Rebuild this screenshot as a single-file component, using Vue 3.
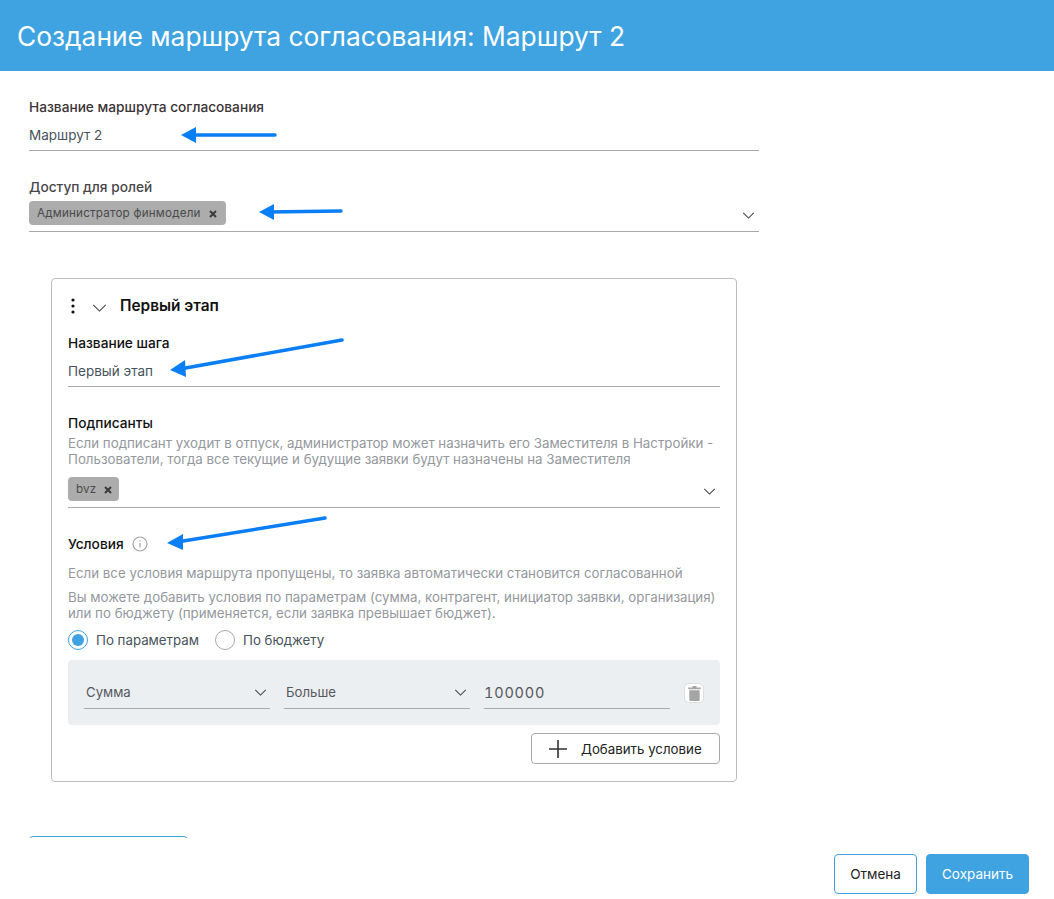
<template>
  <div class="page">
    <header class="head"><h1>Создание маршрута согласования: Маршрут 2</h1></header>
    <main class="body">
      <section class="field name-field">
        <label class="lbl dark">Название маршрута согласования</label>
        <div class="val line">Маршрут 2</div>
      </section>
      <section class="field role-field">
        <label class="lbl grey">Доступ для ролей</label>
        <div class="select line">
          <span class="chip">Администратор финмодели<svg class="x" viewBox="0 0 10 10"><path d="M2 2l6 6M8 2l-6 6"/></svg></span>
          <svg class="chev" viewBox="0 0 14 8"><path d="M1 1l6 6 6-6"/></svg>
        </div>
      </section>
      <section class="card">
        <div class="card-head">
          <svg class="dots" viewBox="0 0 4 16"><circle cx="2" cy="2" r="1.6"/><circle cx="2" cy="8" r="1.6"/><circle cx="2" cy="14" r="1.6"/></svg>
          <svg class="chev big" viewBox="0 0 16 9"><path d="M1 1l7 7 7-7"/></svg>
          <strong>Первый этап</strong>
        </div>
        <label class="lbl black step-lbl">Название шага</label>
        <div class="val line step-val">Первый этап</div>
        <label class="lbl black sign-lbl">Подписанты</label>
        <p class="hint sign-hint">Если подписант уходит в отпуск, администратор может назначить его Заместителя в Настройки - Пользователи, тогда все текущие и будущие заявки будут назначены на Заместителя</p>
        <div class="select line sign-sel">
          <span class="chip small">bvz<svg class="x" viewBox="0 0 10 10"><path d="M2 2l6 6M8 2l-6 6"/></svg></span>
          <svg class="chev" viewBox="0 0 14 8"><path d="M1 1l6 6 6-6"/></svg>
        </div>
        <div class="cond-title">
          <label class="lbl black">Условия</label>
          <svg class="info" viewBox="0 0 16 16"><circle cx="8" cy="8" r="7"/><path d="M8 7v4.5M8 4.2v1.4"/></svg>
        </div>
        <p class="hint h1">Если все условия маршрута пропущены, то заявка автоматически становится согласованной</p>
        <p class="hint h2">Вы можете добавить условия по параметрам (сумма, контрагент, инициатор заявки, организация) или по бюджету (применяется, если заявка превышает бюджет).</p>
        <div class="radios">
          <span class="radio on"></span><span class="rtext">По параметрам</span>
          <span class="radio"></span><span class="rtext">По бюджету</span>
        </div>
        <div class="cond-row">
          <div class="cell c1 line">Сумма<svg class="chev" viewBox="0 0 14 8"><path d="M1 1l6 6 6-6"/></svg></div>
          <div class="cell c2 line">Больше<svg class="chev" viewBox="0 0 14 8"><path d="M1 1l6 6 6-6"/></svg></div>
          <div class="cell c3 line">100000</div>
          <span class="trash"><svg viewBox="1 1 12 14.5"><path d="M1 2.5h12v1.6H1zM5 1h4v1.5H5zM2 5h10v9.5a1 1 0 0 1-1 1H3a1 1 0 0 1-1-1z"/></svg></span>
        </div>
        <div class="add-wrap">
          <button class="add"><svg viewBox="0 0 18 18"><path d="M9 0v18M0 9h18"/></svg>Добавить условие</button>
        </div>
      </section>
      <div class="clipped"></div>
    </main>
    <footer class="foot">
      <button class="btn ghost">Отмена</button>
      <button class="btn solid">Сохранить</button>
    </footer>
    <svg class="arrows" viewBox="0 0 1054 899">
      <g v-for="a in arrows" :key="a.d">
        <path class="shaft" :d="a.d"/>
        <polygon class="tip" :points="a.p"/>
      </g>
    </svg>
  </div>
</template>

<script setup>
const arrows = [
  { d: 'M275 135L190 135', p: '181,135 196,127 196,143' },
  { d: 'M341 211L268 212', p: '259,212 274,204 274,220' },
  { d: 'M342 340L180 369', p: '170,370 185,360 186,377' },
  { d: 'M325 518L177 542', p: '167,543 183,534 183,550' }
]
</script>

<style>
html, body { margin: 0; padding: 0; background: #fff; }
</style>

<style scoped>
.page { position: relative; width: 1054px; height: 899px; display: flex; flex-direction: column; overflow: hidden; font-family: Inter, "Noto Sans", sans-serif; color: #47525c; background: #fff; }
.head { height: 71px; flex: none; background: #3ea3e0; display: flex; align-items: center; padding-left: 17px; }
.head h1 { margin: 0; font-size: 26.35px; font-weight: 400; color: #fff; }
.body { flex: 1; min-height: 0; overflow: hidden; padding: 0 0 0 29px; }
.field { width: 730px; }
.name-field { padding-top: 28px; }
.role-field { padding-top: 28px; }
.lbl { display: block; font-size: 13.7px; line-height: 16px; font-weight: 500; }
.dark { color: #3b3437; }
.grey { color: #47474a; }
.black { color: #111; }
.val { font-size: 13.5px; line-height: 18px; color: #47525c; }
.line { border-bottom: 1px solid #a9a9a9; }
.name-field .val { margin-top: 11px; padding-bottom: 6px; }
.select { display: flex; align-items: center; justify-content: space-between; }
.select > .chev { margin-top: 4px; margin-right: 4px; }
.role-field .select { margin-top: 6px; padding-bottom: 6px; height: 24px; }
.chip { display: inline-flex; align-items: center; background: #acacac; border-radius: 4px; height: 24px; padding: 0 8px; font-size: 11.65px; color: #4a4a4a; letter-spacing: .2px; }
.chip.small { padding-right: 6px; }
.x { width: 10px; height: 10px; margin-left: 7px; margin-top: 2px; }
.x path { stroke: #3a3a3a; stroke-width: 2; fill: none; }
.chev { width: 13px; height: 7px; margin-right: 3px; flex: none; }
.chev path { fill: none; stroke: #444; stroke-width: 1.2; }
.card { box-sizing: border-box; width: 686px; height: 504px; margin: 46px 0 0 22px; padding: 0 16px; border: 1px solid #bdbdbd; border-radius: 4px; background: #fff; }
.card-head { display: flex; align-items: center; height: 54px; }
.dots { width: 4px; height: 16px; fill: #111; margin: 0 0 0 3px; }
.chev.big { width: 15px; height: 8px; margin: 4px 0 0 17px; }
.card-head strong { margin-left: 13px; font-size: 15.4px; line-height: 18px; font-weight: 600; color: #111; }
.step-lbl { margin-top: 2px; }
.step-val { margin-top: 11px; padding-bottom: 6px; }
.sign-lbl { margin-top: 28px; }
.hint { margin: 0; font-size: 13.3px; line-height: 16px; color: #94989d; }
.sign-hint { margin-top: 4px; }
.sign-sel { margin-top: 10px; height: 24px; padding-bottom: 6px; }
.cond-title { display: flex; align-items: center; gap: 8px; margin-top: 28px; }
.info { width: 16px; height: 16px; }
.info circle, .info path { fill: none; stroke: #a3a3a3; stroke-width: 1.2; }
.h1 { margin-top: 13px; }
.h2 { margin-top: 8px; }
.radios { display: flex; align-items: center; margin-top: 9px; height: 20px; font-size: 13.3px; color: #47525c; }
.radio { box-sizing: border-box; width: 20px; height: 20px; border-radius: 50%; border: 1px solid #a9a9a9; background: #fff; flex: none; position: relative; }
.radio.on { border-color: #3ea3e0; }
.radio.on::after { content: ""; position: absolute; inset: 3px; border-radius: 50%; background: #3ea3e0; }
.rtext { margin: 0 16px 0 8px; }
.cond-row { display: flex; align-items: flex-start; gap: 14px; height: 65px; margin-top: 10px; padding: 16px 16px 0; box-sizing: border-box; background: #eceff2; border-radius: 4px; }
.cell { box-sizing: border-box; display: flex; align-items: center; justify-content: space-between; height: 33px; padding: 0 0 0 2px; font-size: 13.2px; color: #55585c; }
.c1, .c2 { width: 186px; }
.c3 { width: 186px; padding-left: 0; font-size: 14.5px; font-variant-numeric: tabular-nums; letter-spacing: .8px; }
.trash { box-sizing: border-box; width: 20px; height: 20px; margin: 7px 0 0 0; background: #fff; border: 1px solid #ddd; border-radius: 5px; display: flex; align-items: center; justify-content: center; }
.trash svg { width: 13px; height: 15px; fill: #a5a5a5; }
.add-wrap { display: flex; justify-content: flex-end; margin-top: 8px; }
.add { box-sizing: border-box; width: 189px; height: 31px; display: flex; align-items: center; padding: 0 0 0 17px; background: #fff; border: 1px solid #a9a9a9; border-radius: 4px; font: inherit; font-size: 13.3px; color: #222; }
.add svg { width: 18px; height: 18px; margin-right: 14px; }
.add path { stroke: #333; stroke-width: 1.6; fill: none; }
.clipped { box-sizing: border-box; width: 159px; height: 40px; margin-top: 54px; border: 1px solid #3ea3e0; border-radius: 4px; }
.foot { flex: none; height: 61px; display: flex; justify-content: flex-end; align-items: flex-start; gap: 9px; padding: 16px 25px 0 0; box-sizing: border-box; background: #fff; }
.btn { box-sizing: border-box; height: 40px; border-radius: 4px; font: inherit; font-size: 13.5px; padding: 0; }
.ghost { width: 83px; background: #fff; border: 1px solid #3ea3e0; color: #222; }
.solid { width: 103px; background: #3ea3e0; border: 1px solid #3ea3e0; color: #fff; }
.arrows { position: absolute; left: 0; top: 0; width: 1054px; height: 899px; pointer-events: none; }
.shaft { stroke: #0a7ef5; stroke-width: 3.5; stroke-linecap: round; fill: none; }
.tip { fill: #0a7ef5; }
</style>
